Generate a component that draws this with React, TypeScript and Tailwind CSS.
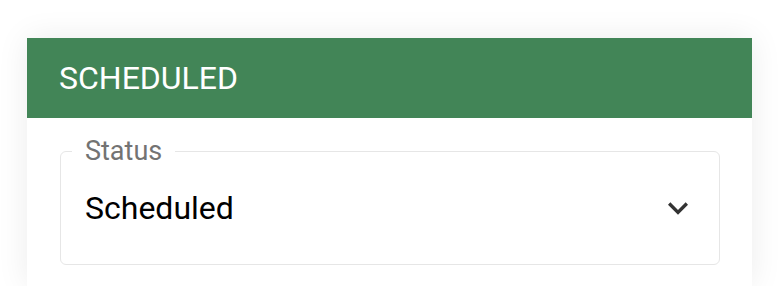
function ExpandIcon() {
  return (
    <svg viewBox="0 0 24 24" className="size-[40px] fill-[#333]" aria-hidden="true">
      <path d="M16.59 8.59 12 13.17 7.41 8.59 6 10l6 6 6-6z" />
    </svg>
  )
}

export default function App() {
  return (
    <div className="min-h-[286px] bg-white pt-[38px] font-['Roboto','Liberation_Sans',sans-serif]">
      <div className="ml-[27px] h-[248px] w-[725px] bg-white shadow-[0_0_30px_rgba(0,0,0,0.08)]">
        <div className="flex h-[80px] items-center bg-[#428557] px-[32px]">
          <h1 className="text-[32px] leading-none text-white">SCHEDULED</h1>
        </div>
        <div className="px-[33px] pt-[17px]">
          <fieldset className="w-[660px] rounded-[6px] border border-[#e6e6e6] pl-[24px] pr-[21px]">
            <legend className="-ml-[13px] px-[13px] text-[27px] leading-[32px] text-[#737373]">Status</legend>
            <div className="flex h-[97px] items-center justify-between pb-[15px]">
              <span className="text-[32px] leading-none text-black">Scheduled</span>
              <ExpandIcon />
            </div>
          </fieldset>
        </div>
      </div>
    </div>
  )
}
